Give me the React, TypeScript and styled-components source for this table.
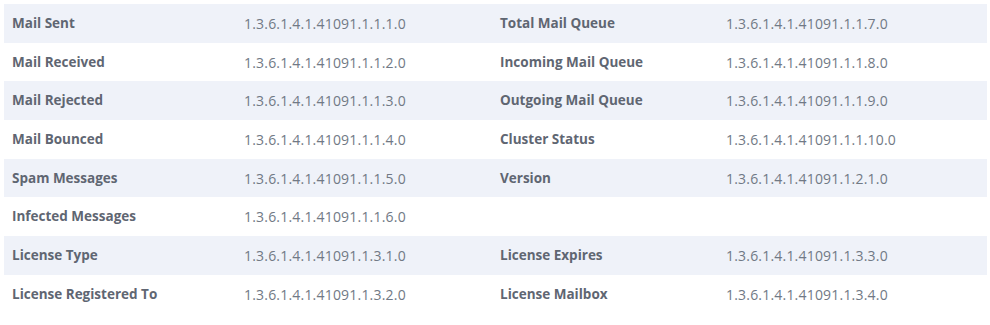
import React from "react";
import styled, { createGlobalStyle } from "styled-components";

const GlobalStyle = createGlobalStyle`
  html, body { margin: 0; padding: 0; background: #ffffff; }
  body { padding: 4px 3px 0 4px; font-family: "Open Sans", Lato, sans-serif; }
`;

const Table = styled.table`
  width: 983px;
  border-collapse: collapse;
  table-layout: fixed;
  font-size: 13.5px;
`;

const Col = styled.col<{ $w: number }>`
  width: ${(p) => p.$w}px;
`;

const Row = styled.tr<{ $striped: boolean }>`
  background: ${(p) => (p.$striped ? "#eff2f9" : "#ffffff")};
`;

const Cell = styled.td`
  padding: 10px 8px 9.2px;
  line-height: 19.5px;
  white-space: nowrap;
`;

const Label = styled(Cell)`
  font-weight: 700;
  color: #5f6672;
`;

const Value = styled(Cell)`
  font-size: 14px;
  letter-spacing: 0.2px;
  font-weight: 400;
  color: #717985;
`;

const rows: [string, string, string, string][] = [
  ["Mail Sent", "1.3.6.1.4.1.41091.1.1.1.0", "Total Mail Queue", "1.3.6.1.4.1.41091.1.1.7.0"],
  ["Mail Received", "1.3.6.1.4.1.41091.1.1.2.0", "Incoming Mail Queue", "1.3.6.1.4.1.41091.1.1.8.0"],
  ["Mail Rejected", "1.3.6.1.4.1.41091.1.1.3.0", "Outgoing Mail Queue", "1.3.6.1.4.1.41091.1.1.9.0"],
  ["Mail Bounced", "1.3.6.1.4.1.41091.1.1.4.0", "Cluster Status", "1.3.6.1.4.1.41091.1.1.10.0"],
  ["Spam Messages", "1.3.6.1.4.1.41091.1.1.5.0", "Version", "1.3.6.1.4.1.41091.1.2.1.0"],
  ["Infected Messages", "1.3.6.1.4.1.41091.1.1.6.0", "", ""],
  ["License Type", "1.3.6.1.4.1.41091.1.3.1.0", "License Expires", "1.3.6.1.4.1.41091.1.3.3.0"],
  ["License Registered To", "1.3.6.1.4.1.41091.1.3.2.0", "License Mailbox", "1.3.6.1.4.1.41091.1.3.4.0"],
];

const widths = [232, 256, 226, 269];

export default function App() {
  return (
    <>
      <GlobalStyle />
      <Table>
        <colgroup>
          {widths.map((w, i) => (
            <Col key={i} $w={w} />
          ))}
        </colgroup>
        <tbody>
          {rows.map((r, i) => (
            <Row key={i} $striped={i % 2 === 0}>
              <Label>{r[0]}</Label>
              <Value>{r[1]}</Value>
              <Label>{r[2]}</Label>
              <Value>{r[3]}</Value>
            </Row>
          ))}
        </tbody>
      </Table>
    </>
  );
}
